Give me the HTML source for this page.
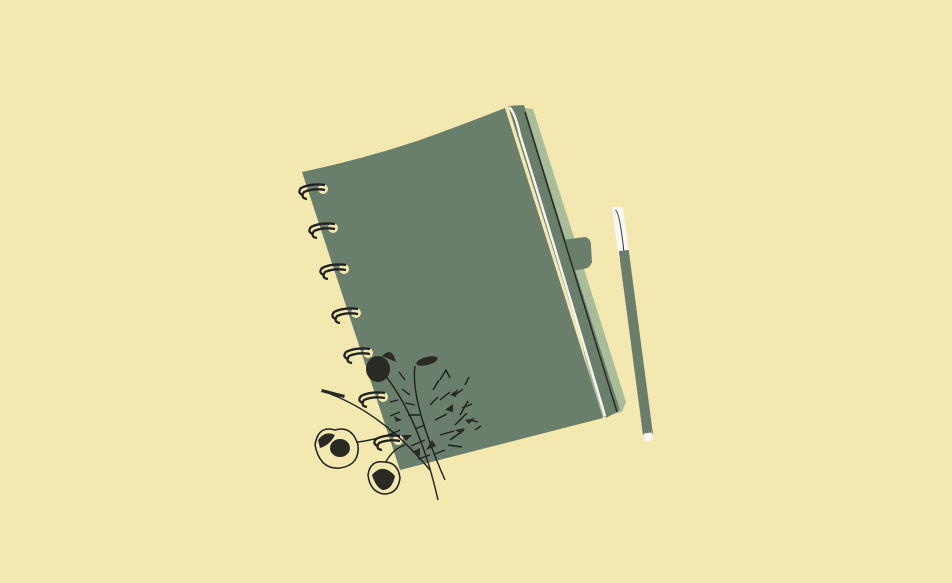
<!DOCTYPE html>
<html><head><style>html,body{margin:0;padding:0;background:#f3e8b0;}svg{display:block}</style></head>
<body>
<svg width="952" height="583" viewBox="0 0 952 583" xmlns="http://www.w3.org/2000/svg">
<defs>
<g id="r"><circle cx="0" cy="0" r="5" fill="#f3e8b0" stroke="none"/><path d="M2 -4 Q-12 -6 -22 -1 Q-26 4 -20 6 M2 1 Q-10 -1 -19 3 Q-23 9 -16 10"/></g>
</defs>
<rect width="952" height="583" fill="#f3e8b0"/>
<!-- back light green page -->
<path d="M524 108 L533 109 Q575 240 626 402 L622 412 L600 418 Z" fill="#a9bd9b"/>
<!-- tab -->
<path d="M562 240 L585 237 Q591 238 591 246 L592 262 Q590 268 584 269 L570 271 Z" fill="#6a7f6b"/>
<!-- dark strip back cover -->
<path d="M508 106 L524 105 Q568 250 620 410 L606 418 Z" fill="#6a7f6b"/>
<path d="M525 112 Q570 260 617 412" stroke="#2a2a25" stroke-width="1.5" fill="none"/>
<!-- cover -->
<path d="M302 172 Q360 160 420 140 Q470 122 505 108 Q550 250 603 418 L400 470 Z" fill="#6a7f6b"/>
<path d="M509 107 Q515 112 520 135 Q562 270 605 416" stroke="#f6f4ec" stroke-width="2.5" fill="none"/>
<!-- rings -->
<g fill="none" stroke="#222" stroke-width="2.3">
<use href="#r" x="323" y="189"/>
<use href="#r" x="333" y="228"/>
<use href="#r" x="344" y="269"/>
<use href="#r" x="356" y="313"/>
<use href="#r" x="368" y="353"/>
<use href="#r" x="383" y="397"/>
<use href="#r" x="398" y="440"/>
</g>
<!-- pen -->
<g transform="translate(617,207) rotate(-7.5)">
<rect x="-5" y="0" width="11" height="52" rx="2" fill="#f8f7f2"/>
<path d="M-2 3 Q2 5 1 45" stroke="#333" stroke-width="1" fill="none"/>
<rect x="-4" y="44" width="10" height="186" fill="#6a7f6b"/>
<rect x="-3.5" y="228" width="9" height="8" rx="2" fill="#f8f7f2"/>
</g>
<!-- flowers -->
<g stroke="#1f1f1c" fill="none" stroke-width="1.4">
<path d="M385 375 Q420 420 438 500"/>
<path d="M415 366 Q410 400 445 480"/>
<path d="M322 391 Q380 410 430 470"/>
<path d="M350 443 Q380 440 400 430"/>
<path d="M383 468 Q390 450 405 445"/>
<path d="M410 395 l-8 -6 M415 405 l-10 -2 M420 415 l-12 0 M425 425 l-10 4 M430 405 l8 -8 M435 420 l12 -6 M440 435 l14 -4 M445 450 l-10 4 M450 440 l14 -10 M455 425 l12 -12 M460 415 l8 -14 M433 390 l6 -10 M440 400 l10 -8 M425 440 l-14 6 M430 455 l-12 4"/>
<path d="M440 380 l6 -10 l4 8 M455 395 l8 -6 M462 408 l10 -4 M470 420 l8 2 M448 445 l14 2 M405 380 l-6 -8 M465 385 l4 -8 M475 430 l6 -4 M398 400 l-8 2 M400 412 l-10 4"/>
</g>
<g fill="#2a2a25">
<ellipse cx="378" cy="369" rx="12" ry="13"/>
<path d="M382 356 Q392 346 396 362 Z"/>
<ellipse cx="427" cy="361" rx="11" ry="4" transform="rotate(-15 427 361)"/>
<path d="M322 389 L345 395 L344 398 L321 392 Z"/>
<path d="M315 445 Q318 425 335 430 Q352 425 358 445 Q360 465 340 468 Q320 470 315 445Z" fill="#f3e8b0" stroke="#1f1f1c" stroke-width="1.5"/>
<ellipse cx="340" cy="448" rx="10" ry="9"/>
<path d="M318 440 Q325 430 335 435 Q330 445 320 448Z"/>
<path d="M368 475 Q370 460 384 462 Q398 462 400 478 Q398 494 384 494 Q370 492 368 475Z" fill="#f3e8b0" stroke="#1f1f1c" stroke-width="1.5"/>
<path d="M372 475 Q383 462 395 476 Q392 490 383 490 Q376 488 372 475Z"/>
<path d="M402 420 l-8 -4 l2 6Z M412 435 l-10 0 l4 6Z M420 448 l-8 4 l8 4Z M445 410 l8 -6 l0 8Z M455 430 l10 -2 l-4 6Z M432 440 l-6 10 l10 -4Z M450 395 l8 -6 l-2 8Z M465 420 l10 -2 l-6 6Z"/>
</g>
</svg>
</body></html>
